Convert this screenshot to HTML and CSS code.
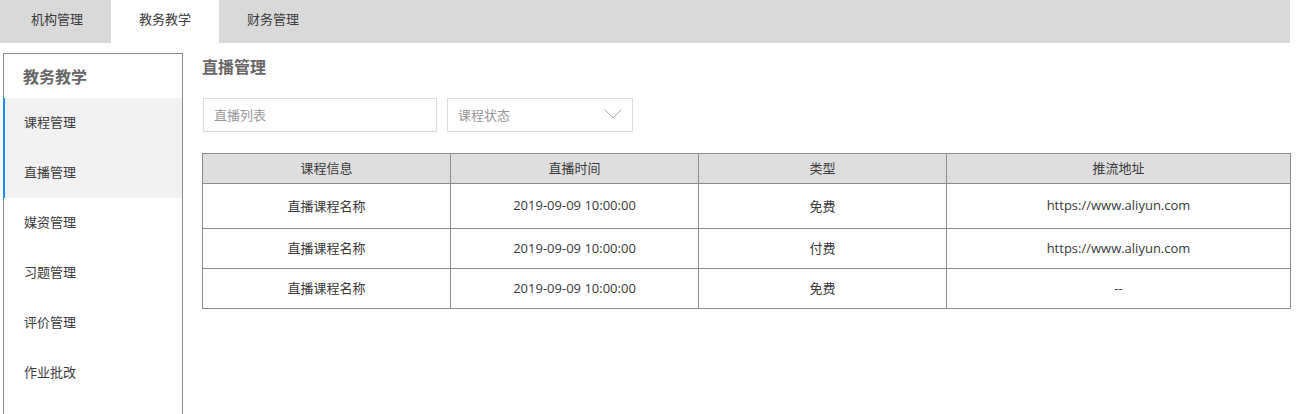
FILE: index.html
```html
<!DOCTYPE html>
<html lang="zh-CN">
<head>
<meta charset="utf-8">
<title>直播管理</title>
<link rel="stylesheet" href="styles.css">
</head>
<body>
<div class="page">
  <nav class="topnav">
    <div class="tab">机构管理</div>
    <div class="tab active">教务教学</div>
    <div class="tab">财务管理</div>
  </nav>
  <div class="body">
    <aside class="sidebar">
      <div class="side-title">教务教学</div>
      <ul class="menu">
        <li class="item on">课程管理</li>
        <li class="item on">直播管理</li>
        <li class="item">媒资管理</li>
        <li class="item">习题管理</li>
        <li class="item">评价管理</li>
        <li class="item">作业批改</li>
      </ul>
    </aside>
    <main class="main">
      <h2 class="title">直播管理</h2>
      <div class="filters">
        <div class="input">直播列表</div>
        <div class="select">
          <span>课程状态</span>
          <svg class="chev" width="18" height="10" viewBox="0 0 18 10"><polyline points="0.5,0.5 9,9 17.5,0.5" fill="none" stroke="#aaa" stroke-width="1"/></svg>
        </div>
      </div>
      <table class="grid">
        <thead>
          <tr><th class="c1">课程信息</th><th class="c2">直播时间</th><th class="c3">类型</th><th class="c4">推流地址</th></tr>
        </thead>
        <tbody>
          <tr class="r1"><td>直播课程名称</td><td>2019-09-09 10:00:00</td><td>免费</td><td>https://www.aliyun.com</td></tr>
          <tr class="r2"><td>直播课程名称</td><td>2019-09-09 10:00:00</td><td>付费</td><td>https://www.aliyun.com</td></tr>
          <tr class="r2"><td>直播课程名称</td><td>2019-09-09 10:00:00</td><td>免费</td><td>--</td></tr>
        </tbody>
      </table>
    </main>
  </div>
</div>
</body>
</html>
```
FILE: styles.css
```css
* { box-sizing: border-box; }
html, body { margin: 0; padding: 0; background: #fff; }
body {
  font-family: "Open Sans", "Noto Sans CJK SC", sans-serif;
  font-size: 13px;
  color: #3a3a3a;
  overflow: hidden;
}
.page { width: 1290px; }
.topnav {
  display: flex;
  height: 43px;
  background: #d9d9d9;
  padding-left: 3px;
}
.tab {
  width: 108px;
  display: flex;
  align-items: center;
  justify-content: center;
  padding-bottom: 7px;
  color: #3a3a3a;
}
.tab.active { background: #fff; }
.body {
  display: flex;
  margin-top: 10px;
  padding-left: 3px;
  gap: 19px;
}
.sidebar {
  width: 180px;
  height: 380px;
  border: 1px solid #8c8c8c;
  flex-shrink: 0;
}
.side-title {
  height: 44px;
  padding-left: 19px;
  padding-bottom: 1px;
  display: flex;
  align-items: center;
  font-size: 16px;
  font-weight: bold;
  color: #666;
}
.menu { list-style: none; margin: 0; padding: 0; }
.item {
  height: 50px;
  display: flex;
  align-items: center;
  padding-left: 19px;
  padding-bottom: 4px;
  margin-left: -1px;
  border-left: 2px solid transparent;
  color: #3a3a3a;
}
.item.on {
  background: #f2f2f2;
  border-left-color: #1890ff;
}
.main { flex: 1; }
.title {
  margin: 0;
  height: 26px;
  display: flex;
  align-items: center;
  font-size: 16px;
  font-weight: bold;
  color: #666;
}
.filters {
  display: flex;
  gap: 10px;
  margin-top: 19px;
  margin-left: 1px;
}
.input, .select {
  height: 34px;
  border: 1px solid #dcdcdc;
  display: flex;
  align-items: center;
  padding-left: 10px;
  padding-bottom: 2px;
  color: #999;
}
.input { width: 234px; }
.select {
  width: 186px;
  justify-content: space-between;
  padding-right: 10px;
}
.chev { display: block; }
.grid {
  margin-top: 21px;
  width: 1088px;
  border-collapse: collapse;
  table-layout: fixed;
}
.grid th, .grid td {
  border: 1px solid #8c8c8c;
  text-align: center;
  font-weight: normal;
  padding: 0 0 2px 0;
  color: #3a3a3a;
}
.grid th { background: #dedede; height: 30px; }
.c1, .c2, .c3 { width: 248px; }
.c4 { width: 344px; }
.r1 td { height: 45px; }
.r2 td { height: 40px; }
```
